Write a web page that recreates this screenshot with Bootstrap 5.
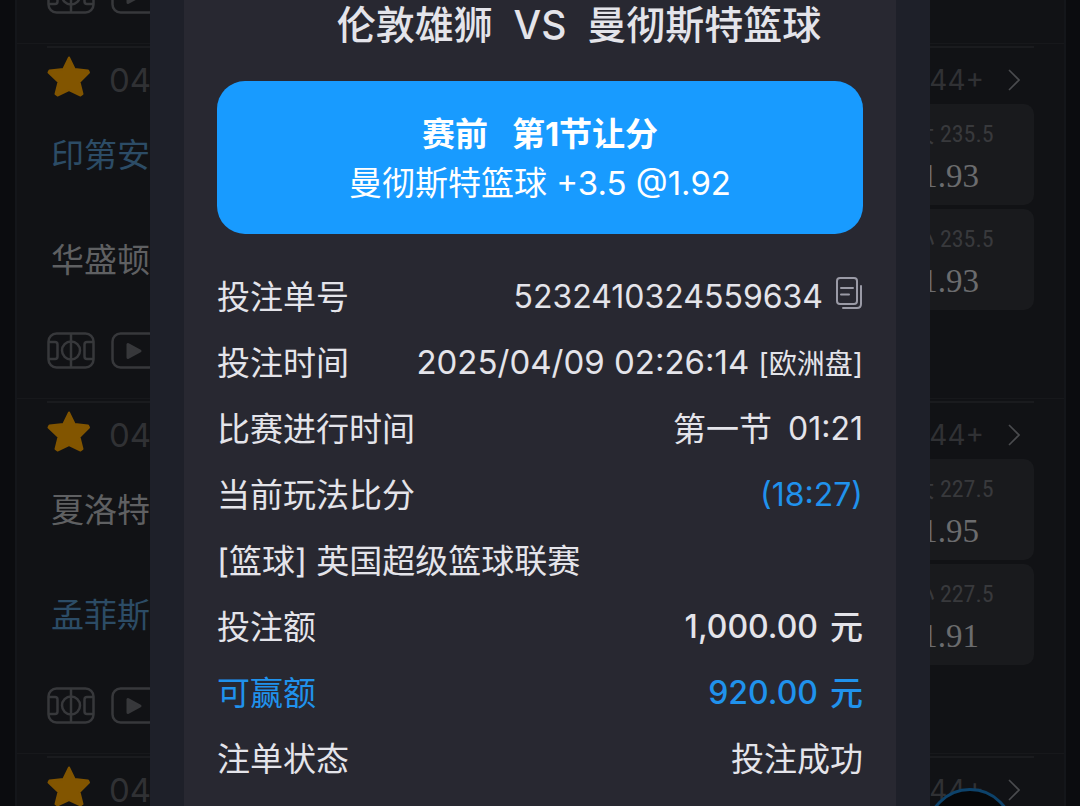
<!DOCTYPE html>
<html lang="zh-CN">
<head>
<meta charset="utf-8">
<meta name="viewport" content="width=device-width, initial-scale=1">
<title>投注详情</title>
<link href="https://cdn.jsdelivr.net/npm/bootstrap@5.3.0/dist/css/bootstrap.min.css" rel="stylesheet">
<style>
  body { background: #0b0c0f; color: #e4e4ea; font-family: Inter, "Noto Sans CJK SC", sans-serif; font-size: 33px; line-height: 48px; }
  .page { height: 100vh; }

  /* match list behind the dialog */
  .match-list { background: #111215; border: solid #14161a; border-width: 0 2px; margin: 0 14px 0 15px; }
  .match { border-top: 1px solid #17181b; padding: 2px 30px 29px; }
  .match-inner { border-top: 2px solid #1a1b1e; }
  .match-tail { padding: 0 30px 29px; margin-top: -23px; }
  .match-head { height: 56px; color: #303134; }
  .match-head .match-date { margin-left: 18px; padding-top: 8px; }
  .match-more { color: #303134; font-size: 28px; padding-top: 8px; }
  .match-more svg { margin: 0 14px 0 24px; }
  .match-row { height: 101px; }
  .team { color: #5f6062; padding-left: 4px; }
  .team-pick { color: #2c4c66; }
  .odd-btn { width: 168px; background: #191a1d; border: 0; border-radius: 10px; color: #6b6c6e; font-family: "Liberation Serif", serif; line-height: 42px; }
  .odd-line { color: #38393c; font-family: "Roboto Condensed", Roboto, "Noto Sans CJK SC", sans-serif; font-size: 24px; padding-left: 4px; }
  .media { gap: 16px; color: #37383b; }
  .match .media { margin-top: 22px; }
  .float-ball { width: 88px; height: 88px; right: 66px; bottom: -70px; border: 3px solid #0d426a; background: #060709; }

  /* bet slip dialog */
  .slip-frame { width: 100%; max-width: 780px; background: #1e2029; padding: 0 34px; }
  .slip { background: #282831; padding: 0 33px; }
  .slip-title { font-size: 39px; line-height: 50px; font-weight: 500; padding-left: 78px; }
  .pick { background: #189bff; color: #fff; border-radius: 28px; line-height: 49px; margin-top: 31px; padding: 29px 0 26px; }
  .pick-gap { margin-left: 24px; }
  .details { margin-top: 30px; }
  .details > div { height: 66px; }
  .blue { color: #2092ec; }
  .market { font-size: 28px; }
  .num { font-size: 32px; }
  .num-gap { margin-right: 12px; }
</style>
</head>
<body>
<svg class="d-none" xmlns="http://www.w3.org/2000/svg">
  <symbol id="star" viewBox="0 0 44 42"><path d="M22 2.500 27.600 14 41 15.500 42 17.500 32.500 27 35.500 39 33.500 40.500 22 35 10.500 40.500 8.500 39 11.500 27 1.500 17.500 2.500 15.500 16.400 14Z" fill="#825500" stroke="#825500" stroke-width="2" stroke-linejoin="round"/></symbol>
  <symbol id="court" viewBox="0 0 48 37"><g fill="none" stroke="currentColor" stroke-width="2.500"><rect x="1.500" y="1.500" width="45" height="34" rx="8"/><path d="M24 1.500v34M1.500 10H8q2.500 0 2.500 2.500v12Q10.500 27 8 27H1.500M46.500 10H40q-2.500 0-2.500 2.500v12q0 2.500 2.500 2.500h6.500"/><circle cx="24" cy="18.500" r="9"/></g></symbol>
  <symbol id="play" viewBox="0 0 48 37"><rect x="1.500" y="1.500" width="45" height="34" rx="8" fill="none" stroke="currentColor" stroke-width="2.500"/><path d="M17 12.500v13l12-6.500z" fill="currentColor" stroke="currentColor" stroke-width="3" stroke-linejoin="round"/></symbol>
  <symbol id="next" viewBox="0 0 12 22"><path d="M1 1 11 11 1 21" fill="none" stroke="#4a4b4e" stroke-width="1.600"/></symbol>
</svg>

<div class="page position-relative overflow-hidden">
  <main class="match-list">
    <section class="match-tail">
      <div class="media d-flex"><svg width="48" height="37"><use href="#court"/></svg><svg width="48" height="37"><use href="#play"/></svg></div>
    </section>

    <section class="match">
      <div class="match-inner">
        <div class="match-head d-flex align-items-center">
          <svg width="44" height="42"><use href="#star"/></svg>
          <span class="match-date">04</span>
          <span class="match-more ms-auto d-flex align-items-center">44+<svg width="12" height="22"><use href="#next"/></svg></span>
        </div>
        <div class="match-row d-flex justify-content-between align-items-center mb-1">
          <span class="team team-pick">印第安</span>
          <button type="button" class="odd-btn h-100"><span class="odd-line d-block">大 235.5</span>1.93</button>
        </div>
        <div class="match-row d-flex justify-content-between align-items-center">
          <span class="team">华盛顿</span>
          <button type="button" class="odd-btn h-100"><span class="odd-line d-block">小 235.5</span>1.93</button>
        </div>
        <div class="media d-flex"><svg width="48" height="37"><use href="#court"/></svg><svg width="48" height="37"><use href="#play"/></svg></div>
      </div>
    </section>

    <section class="match">
      <div class="match-inner">
        <div class="match-head d-flex align-items-center">
          <svg width="44" height="42"><use href="#star"/></svg>
          <span class="match-date">04</span>
          <span class="match-more ms-auto d-flex align-items-center">44+<svg width="12" height="22"><use href="#next"/></svg></span>
        </div>
        <div class="match-row d-flex justify-content-between align-items-center mb-1">
          <span class="team">夏洛特</span>
          <button type="button" class="odd-btn h-100"><span class="odd-line d-block">大 227.5</span>1.95</button>
        </div>
        <div class="match-row d-flex justify-content-between align-items-center">
          <span class="team team-pick">孟菲斯</span>
          <button type="button" class="odd-btn h-100"><span class="odd-line d-block">小 227.5</span>1.91</button>
        </div>
        <div class="media d-flex"><svg width="48" height="37"><use href="#court"/></svg><svg width="48" height="37"><use href="#play"/></svg></div>
      </div>
    </section>

    <section class="match">
      <div class="match-inner">
        <div class="match-head d-flex align-items-center">
          <svg width="44" height="42"><use href="#star"/></svg>
          <span class="match-date">04</span>
          <span class="match-more ms-auto d-flex align-items-center">44+<svg width="12" height="22"><use href="#next"/></svg></span>
        </div>
      </div>
    </section>
  </main>
  <div class="float-ball position-absolute rounded-circle"></div>

  <div class="position-absolute top-0 start-0 w-100 h-100 d-flex justify-content-center" role="dialog" aria-labelledby="slip-title">
    <div class="slip-frame h-100">
      <div class="slip h-100">
        <h1 class="slip-title text-center text-nowrap mb-0" id="slip-title">伦敦雄狮&nbsp; VS &nbsp;曼彻斯特篮球</h1>
        <div class="pick text-center">
          <div class="fw-bold">赛前<span class="pick-gap">第1节让分</span></div>
          <div>曼彻斯特篮球 +3.5 @1.92</div>
        </div>
        <div class="details text-nowrap">
          <div class="d-flex justify-content-between align-items-center"><span>投注单号</span><span class="d-flex align-items-center"><span class="num num-gap">5232410324559634</span>
            <button type="button" class="btn border-0 p-0 lh-1 pb-2" aria-label="复制">
              <svg width="28" height="32" viewBox="0 0 28 32" fill="none" stroke="#9a9aa6" stroke-width="2"><rect x="2" y="1" width="20" height="26" rx="3"/><path d="M6 11h12M6 17.500h8M26 9v18q0 4-4 4H8" stroke-linecap="round"/></svg>
            </button></span></div>
          <div class="d-flex justify-content-between align-items-center"><span>投注时间</span><span>2025/04/09 02:26:14 <span class="market">[欧洲盘]</span></span></div>
          <div class="d-flex justify-content-between align-items-center"><span>比赛进行时间</span><span class="d-flex align-items-center"><span class="me-3">第一节</span><span class="num">01:21</span></span></div>
          <div class="d-flex justify-content-between align-items-center"><span>当前玩法比分</span><span class="blue num">(18:27)</span></div>
          <div class="d-flex align-items-center"><span>[篮球] 英国超级篮球联赛</span></div>
          <div class="d-flex justify-content-between align-items-center"><span>投注额</span><span class="fw-medium d-flex align-items-center"><span class="num num-gap">1,000.00</span>元</span></div>
          <div class="d-flex justify-content-between align-items-center blue"><span>可赢额</span><span class="fw-medium d-flex align-items-center"><span class="num num-gap">920.00</span>元</span></div>
          <div class="d-flex justify-content-between align-items-center"><span>注单状态</span><span>投注成功</span></div>
        </div>
      </div>
    </div>
  </div>
</div>
<script src="https://cdn.jsdelivr.net/npm/bootstrap@5.3.0/dist/js/bootstrap.bundle.min.js"></script>
</body>
</html>
